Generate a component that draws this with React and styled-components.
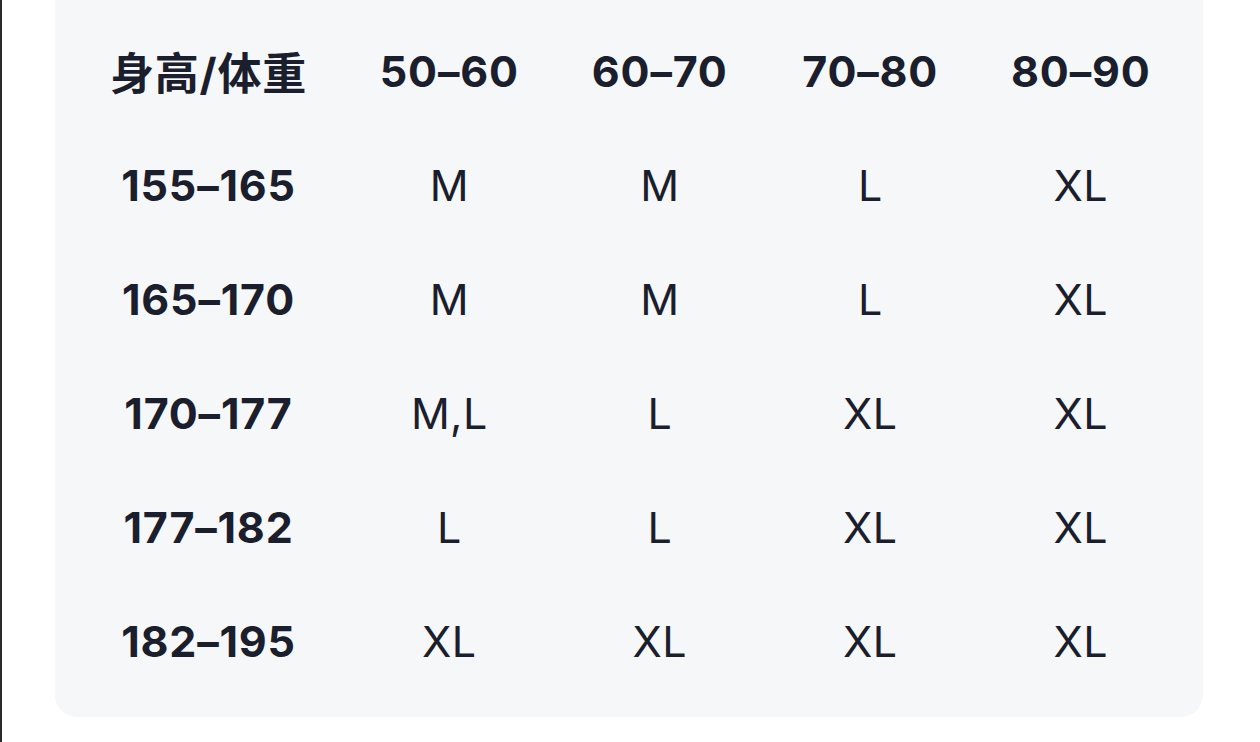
import React from "react";
import styled, { createGlobalStyle } from "styled-components";

const GlobalStyle = createGlobalStyle`
  html, body {
    margin: 0;
    padding: 0;
    background: #ffffff;
  }
  body {
    font-family: Inter, "Noto Sans CJK SC", "Noto Sans", sans-serif;
  }
`;

const Page = styled.div`
  width: 1260px;
  height: 742px;
  display: flex;
  background: #ffffff;
  border-left: 2px solid #2a2a2e;
  box-sizing: border-box;
  overflow: hidden;
`;

const Card = styled.div`
  margin-left: 53px;
  width: 1148px;
  height: 717px;
  box-sizing: border-box;
  padding: 14px 18px 18px;
  background: #f6f7f9;
  border-radius: 0 0 22px 22px;
  display: grid;
  grid-template-columns: 271px repeat(4, 210.5px);
  grid-auto-rows: 114px;
`;

const Cell = styled.div`
  display: flex;
  align-items: center;
  justify-content: center;
  color: #1b1e2c;
  font-size: ${(p) => (p.$cjk ? "44px" : "43px")};
  font-weight: ${(p) => (p.$bold ? 700 : 400)};
  letter-spacing: ${(p) => (p.$bold ? "0.8px" : "0.4px")};
  white-space: nowrap;
`;

const weights = ["50–60", "60–70", "70–80", "80–90"];

const rows = [
  ["155–165", "M", "M", "L", "XL"],
  ["165–170", "M", "M", "L", "XL"],
  ["170–177", "M,L", "L", "XL", "XL"],
  ["177–182", "L", "L", "XL", "XL"],
  ["182–195", "XL", "XL", "XL", "XL"],
];

export default function App() {
  return (
    <>
      <GlobalStyle />
      <Page>
        <Card>
          <Cell $bold $cjk>
            身高/体重
          </Cell>
          {weights.map((w) => (
            <Cell $bold key={w}>
              {w}
            </Cell>
          ))}
          {rows.map((row) =>
            row.map((v, i) => (
              <Cell $bold={i === 0} key={row[0] + i}>
                {v}
              </Cell>
            ))
          )}
        </Card>
      </Page>
    </>
  );
}
